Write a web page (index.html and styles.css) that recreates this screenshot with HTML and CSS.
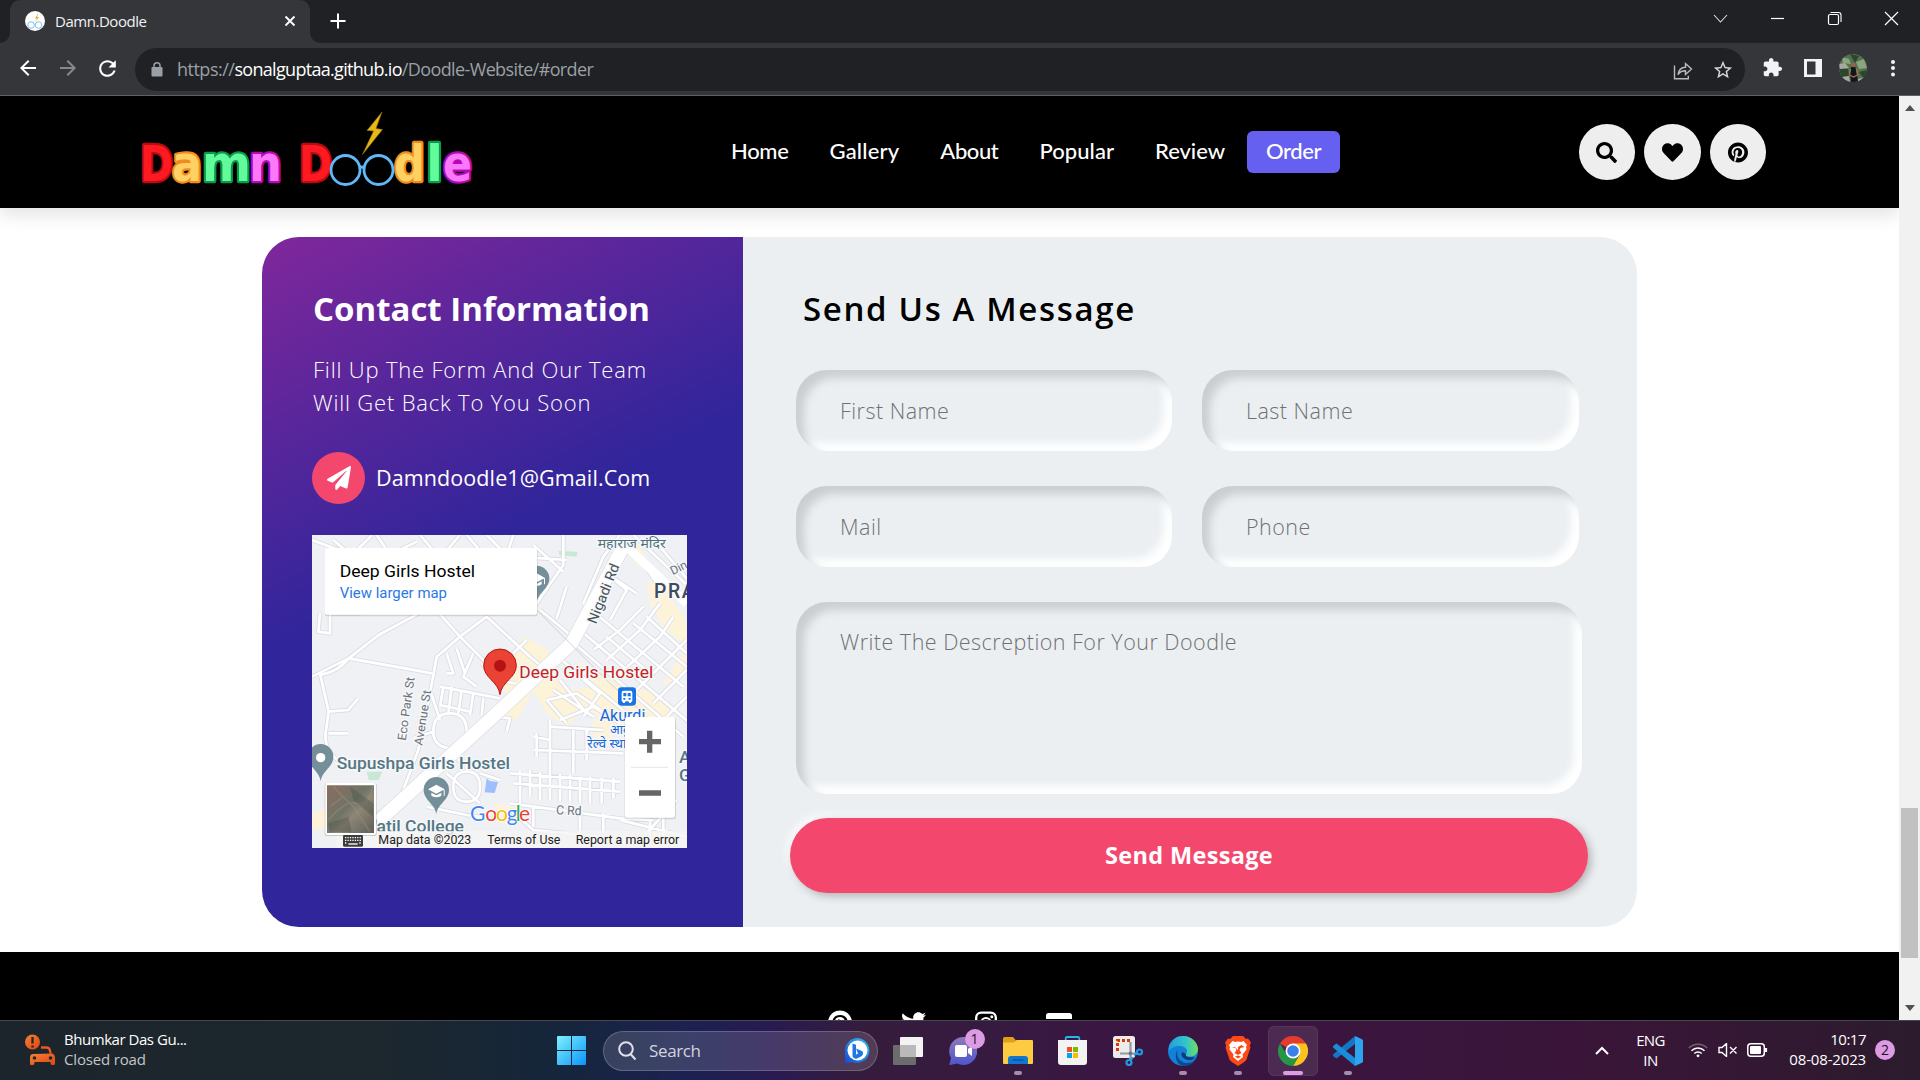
FILE: index.html
```html
<!DOCTYPE html>
<html lang="en">
<head>
<meta charset="utf-8">
<title>Damn.Doodle</title>
<link rel="stylesheet" href="styles.css">
</head>
<body>
<svg class="defs" width="0" height="0" aria-hidden="true">
  <defs>
    <symbol id="pinterest" viewBox="0 0 496 512"><path d="M496 256c0 137-111 248-248 248-25.600 0-50.200-3.900-73.400-11.100 10.100-16.500 25.200-43.500 30.800-65 3-11.600 15.400-59 15.400-59 8.100 15.400 31.700 28.500 56.800 28.500 74.800 0 128.700-68.800 128.700-154.300 0-81.900-66.900-143.200-152.900-143.200-107 0-163.900 71.800-163.900 150.100 0 36.400 19.400 81.700 50.300 96.100 4.700 2.200 7.200 1.200 8.300-3.300.8-3.400 5-20.300 6.900-28.100.6-2.500.3-4.700-1.700-7.100-10.100-12.500-18.300-35.300-18.300-56.600 0-54.700 41.400-107.600 112-107.600 60.900 0 103.600 41.500 103.600 100.900 0 67.100-33.900 113.600-78 113.600-24.300 0-42.600-20.100-36.700-44.800 7-29.500 20.500-61.300 20.500-82.600 0-19-10.200-34.900-31.400-34.900-24.900 0-44.900 25.700-44.900 60.200 0 22 7.400 36.800 7.400 36.800s-24.500 103.800-29 123.200c-5 21.400-3 51.600-.9 71.200C65.400 450.900 0 361.100 0 256 0 119 111 8 248 8s248 111 248 248z"/></symbol>
  </defs>
</svg>

<div class="screen">
  <header class="tabstrip">
    <div class="tab">
      <svg class="favicon" width="20" height="20" viewBox="0 0 20 20"><circle cx="10" cy="10" r="10" fill="#fff"/><path d="M13.500 2 10 7.500l2-.3-2 4 4-5.200-2 .3z" fill="#d8a91c"/><circle cx="6" cy="14" r="3.300" fill="none" stroke="#7cc0f5"/><circle cx="13.500" cy="14" r="3.300" fill="none" stroke="#7cc0f5"/></svg>
      <span class="tab-title">Damn.Doodle</span>
      <svg width="12" height="12" viewBox="0 0 12 12"><path d="M1.500 1.500l9 9m0-9l-9 9" stroke="#fff" stroke-width="1.900"/></svg>
    </div>
    <svg class="newtab" width="16" height="16" viewBox="0 0 16 16"><path d="M8 .5v15M.5 8h15" stroke="#fff" stroke-width="2"/></svg>
    <div class="window-buttons">
      <svg viewBox="0 0 57 36"><path d="M22 15l6.500 7 6.500-7" fill="none" stroke="#e0e0e0" stroke-width="1.100"/></svg>
      <svg viewBox="0 0 57 36"><path d="M22 18.500h13" stroke="#fff" stroke-width="1.200"/></svg>
      <svg viewBox="0 0 57 36"><rect x="22.500" y="14.500" width="10" height="10" rx="1.500" fill="none" stroke="#fff" stroke-width="1.200"/><path d="M24.500 12.500h8a2.500 2.500 0 0 1 2.500 2.500v7" fill="none" stroke="#fff" stroke-width="1.100"/></svg>
      <svg viewBox="0 0 57 36"><path d="M22 12l13 13m0-13l-13 13" stroke="#fff" stroke-width="1.200"/></svg>
    </div>
  </header>

  <div class="toolbar">
    <span class="tool nav-tool"><svg width="24" height="24" viewBox="0 0 24 24" fill="#fff"><path d="M20 11H7.830l5.590-5.590L12 4l-8 8 8 8 1.410-1.410L7.830 13H20v-2z"/></svg></span>
    <span class="tool nav-tool"><svg width="24" height="24" viewBox="0 0 24 24" fill="#87898c"><path d="M4 11h12.170l-5.590-5.590L12 4l8 8-8 8-1.410-1.410L16.170 13H4v-2z"/></svg></span>
    <span class="tool nav-tool"><svg width="25" height="25" viewBox="0 0 24 24" fill="#fff"><path d="M17.650 6.350C16.200 4.900 14.210 4 12 4c-4.420 0-7.990 3.580-7.990 8s3.570 8 7.990 8c3.730 0 6.840-2.550 7.730-6h-2.080c-.82 2.330-3.040 4-5.650 4-3.310 0-6-2.690-6-6s2.690-6 6-6c1.660 0 3.140.69 4.220 1.780L13 11h7V4l-2.350 2.350z"/></svg></span>
    <div class="omnibox">
      <svg class="lock" width="12" height="15" viewBox="0 0 12 15"><rect x=".5" y="5" width="11" height="9.500" rx="1.200" fill="#9aa0a6"/><path d="M3 6V3.800a3 3 0 0 1 6 0V6" fill="none" stroke="#9aa0a6" stroke-width="1.500"/></svg>
      <span class="url"><span class="scheme">https://</span><span class="host">sonalguptaa.github.io</span><span class="path">/Doodle-Website/#order</span></span>
      <span class="tool"><svg width="20" height="20" viewBox="0 0 20 20" fill="none" stroke="#b9bbbe" stroke-width="1.400"><path d="M1.500 5.500v13.300h13.800v-3M5 14.500c.8-5 3.500-7 7.500-7.200V3.500l6 5.600-6 5.400v-3.800c-3.500 0-5.800 1.300-7.500 3.800z"/></svg></span>
      <span class="tool"><svg width="22" height="22" viewBox="0 0 24 24" fill="#d5d7da"><path d="M22 9.240l-7.190-.62L12 2 9.190 8.630 2 9.240l5.460 4.730L5.820 21 12 17.270 18.180 21l-1.630-7.030L22 9.240zM12 15.400l-3.760 2.270 1-4.280-3.320-2.880 4.380-.38L12 6.100l1.710 4.040 4.380.38-3.320 2.880 1 4.280L12 15.400z"/></svg></span>
    </div>
    <span class="tool"><svg width="21" height="21" viewBox="0 0 24 24" fill="#f1f3f4"><path d="M20.500 11H19V7c0-1.100-.9-2-2-2h-4V3.500C13 2.120 11.880 1 10.500 1S8 2.120 8 3.500V5H4c-1.100 0-1.990.9-1.990 2v3.800H3.500c1.490 0 2.700 1.210 2.700 2.700s-1.210 2.700-2.700 2.700H2V20c0 1.100.9 2 2 2h3.800v-1.500c0-1.490 1.210-2.700 2.700-2.700 1.490 0 2.700 1.210 2.700 2.700V22H17c1.100 0 2-.9 2-2v-4h1.500c1.380 0 2.500-1.120 2.500-2.500S21.880 11 20.500 11z"/></svg></span>
    <span class="tool"><svg width="18" height="18" viewBox="0 0 18 18"><path d="M0 0h18v18H0zM3 2.500v13h8.500v-13z" fill="#f1f3f4" fill-rule="evenodd"/></svg></span>
    <span class="tool"><svg width="28" height="28" viewBox="0 0 28 28"><clipPath id="av"><circle cx="14" cy="14" r="14"/></clipPath><g clip-path="url(#av)"><path fill="#55724f" d="M0 0h28v28H0z"/><path fill="#8ba57f" d="M3 3l7 2 2 5-8-1zM17 8l8-3 3 9-8 1z"/><path fill="#2c462c" d="M11 0l9 2-4 7zM0 14l9 1 1 7-8 1zM20 18l8-2-3 9z"/><path fill="#a7aaa2" d="M0 10l6-1 4 5-9 1zM3 23l7-1 1 6H5zM19 25l7-2v5h-7z"/><path fill="#13151d" d="M12 13l4-1 2 8 1 8h-7l-1-8z"/><circle cx="14.500" cy="11" r="2.200" fill="#9b604d"/><path d="M11.500 15l-1 6 4 2 4-2-1-6" stroke="#a96f59" stroke-width="1.300" fill="none"/></g></svg></span>
    <span class="tool"><svg width="6" height="18" viewBox="0 0 6 18" fill="#f1f3f4"><circle cx="3" cy="3" r="2"/><circle cx="3" cy="9" r="2"/><circle cx="3" cy="15.500" r="2"/></svg></span>
  </div>

  <div class="viewport">
    <main class="page">
      <div class="site-header">
        <svg class="logo" width="336" height="80" viewBox="138 106 336 80">
          <g font-family="DejaVu Sans" font-weight="700" font-size="49" stroke-width="4.500" stroke-linejoin="round" paint-order="stroke">
            <text x="141" y="179.500" textLength="33" lengthAdjust="spacingAndGlyphs" fill="#ff1a22" stroke="#b90c12">D</text>
            <text x="173" y="179.500" textLength="30" lengthAdjust="spacingAndGlyphs" fill="#ffd062" stroke="#f18c1c">a</text>
            <text x="203" y="179.500" textLength="49" lengthAdjust="spacingAndGlyphs" fill="#62fb9c" stroke="#0b9a4c">m</text>
            <text x="250" y="179.500" textLength="33" lengthAdjust="spacingAndGlyphs" fill="#fb78fb" stroke="#b409b5">n</text>
            <text x="300" y="179.500" textLength="33" lengthAdjust="spacingAndGlyphs" fill="#ff1a22" stroke="#b90c12">D</text>
            <text x="395" y="179.500" textLength="31" lengthAdjust="spacingAndGlyphs" fill="#ffd062" stroke="#f18c1c">d</text>
            <text x="427" y="179.500" textLength="17" lengthAdjust="spacingAndGlyphs" fill="#62fb9c" stroke="#0b9a4c">l</text>
            <text x="444" y="179.500" textLength="29" lengthAdjust="spacingAndGlyphs" fill="#fb78fb" stroke="#b409b5">e</text>
          </g>
          <g fill="none" stroke="#5fb8f8" stroke-width="2.800"><circle cx="346.500" cy="169" r="14.500"/><circle cx="379.500" cy="169" r="14.500"/><path d="M360.500 167q2.500-2 4.800 0"/></g>
          <path d="M383 111l-15 18.500 6.500.5-11 23.500 20-25-6.500-1z" fill="#e8b818" stroke="#8c6a0c" stroke-width=".6"/>
        </svg>
        <nav class="nav">
          <a class="nav-home">Home</a><a>Gallery</a><a class="nav-about">About</a><a class="nav-popular">Popular</a><a class="nav-review">Review</a><a class="active">Order</a>
        </nav>
        <div class="round-buttons">
          <span><svg width="21" height="21" viewBox="0 0 512 512"><path d="M505 442.700L405.300 343c-4.500-4.500-10.600-7-17-7H372c27.600-35.300 44-79.700 44-128C416 93.100 322.900 0 208 0S0 93.100 0 208s93.100 208 208 208c48.300 0 92.700-16.400 128-44v16.300c0 6.400 2.500 12.500 7 17l99.700 99.700c9.400 9.400 24.600 9.400 33.900 0l28.300-28.300c9.400-9.400 9.400-24.600.1-34zM208 336c-70.700 0-128-57.200-128-128 0-70.700 57.200-128 128-128 70.700 0 128 57.200 128 128 0 70.700-57.200 128-128 128z"/></svg></span>
          <span><svg width="21" height="21" viewBox="0 0 512 512"><path d="M462.300 62.600C407.500 15.900 326 24.300 275.700 76.200L256 96.500l-19.700-20.300C186.100 24.300 104.500 15.900 49.700 62.600c-62.800 53.600-66.100 149.800-9.900 207.900l193.500 199.800c12.500 12.900 32.800 12.900 45.300 0l193.500-199.800c56.300-58.100 53-154.300-9.800-207.900z"/></svg></span>
          <span><svg width="20" height="21"><use href="#pinterest"/></svg></span>
        </div>
      </div>

      <section class="contact">
        <div class="info">
          <h2>Contact Information</h2>
          <p>Fill Up The Form And Our Team Will Get Back To You Soon</p>
          <div class="mail">
            <span class="mail-icon"><svg width="24" height="24" viewBox="0 0 512 512" fill="#fff"><path d="M476 3.200L12.500 270.600c-18.100 10.400-15.800 35.600 2.200 43.200L121 358.400l287.300-253.200c5.500-4.900 13.300 2.600 8.600 8.300L176 407v80.500c0 23.600 28.500 32.900 42.500 15.800L282 426l124.600 52.200c14.200 6 30.400-2.900 33-18.200l72-432C515 7.800 493.300-6.800 476 3.200z"/></svg></span>
            <span class="mail-text">Damndoodle1@Gmail.Com</span>
          </div>
          <svg class="map" width="375" height="313" viewBox="36 45 1125 939" font-family="Roboto, 'Noto Sans', sans-serif">
            <defs>
              <g id="streets" fill="none" stroke-linejoin="round">
                <path d="M36 470l110-55 90-70 130-70M146 415l170 30 80 15M60 280l-5 55 35 5V280h90l20-50M146 415q-30 40-85 50l25 110-10 70q0 60 60 90M85 575l60-5 30-35M85 640h60M36 60l120 45 60-60M100 60l60 50M230 45l40 60 80-40M360 45l60 70 60-70M500 45l60 70M560 45l60 60 20-60M650 110l150 10M790 45v90l-90 130M700 75l90 80M720 270l85 70M800 200l-30 95M480 350L400 260M480 350l-70 60-20 110-35 170-60 160-80 40M480 350l120 120M480 350l80-60 130 120 60 50M640 400l40-40M440 400l20 60h-20M470 385l25 75M520 400l-30 70 40 30M545 430l40 50 60 10M420 500l180 35M430 500l-10 60M455 500l-10 80M485 510l-10 70M520 520l-10 65M420 555l90 20M550 535l-5 50"/>
                <path d="M400 635q0-55 50-55t50 55-50 50-50-50M400 635l-60 20M420 600l-30-90M450 685l30 40M460 800q0-45 40-45t40 45-40 45-40-45M440 760l100 90M380 860l120 25 70 10M540 760l60 20M500 755v-40M590 590l40 5-10 40M630 760l330 25M640 790l320 25M660 750v100M690 750v80M720 755v85M750 760v80M780 760v85M810 765v80M840 770v80M870 770v80M905 775v75M940 775v60M700 690l270 10M710 640v70M750 600v160M700 650l50 10M750 620l160 10M820 630v130M860 630v90M630 850l330 45 100 5M630 870l70 60 200 20M700 860v60M840 870v70M910 880v60M960 900l200 50M1090 850v120M1050 900v80M1130 840l-100 110"/>
                <path d="M850 250l60-140 50-65M850 250l300 250M870 250l50-90 60 50-50 90M920 160l90 60M1000 45l160 150M1010 100l60 90M1050 45l110 130M840 330l330 280M810 360l340 290M760 400l320 260M880 390l80-60 70-70M920 420l100-90 60-80M960 460l120-110 40-60M1010 510l150-150M1060 550l100-100M1100 590l60-60M1040 290l120 110M1000 310l160 130M920 350l130 110M740 540l90-20 100 70M780 600l100-40 80 50M740 540l60 70M840 470l60 50-50 70M780 480l80 100M760 510l120 80"/>
              </g>
              <linearGradient id="sat" x1="0" y1="0" x2="1" y2="1"><stop offset="0" stop-color="#8a6d60"/><stop offset=".45" stop-color="#6f7466"/><stop offset=".6" stop-color="#8e8676"/><stop offset="1" stop-color="#5e5f57"/></linearGradient>
            </defs>
            <path fill="#eff1f4" d="M36 45h1125v939H36z"/>
            <g fill="#fdf3d8"><path d="M670 350l75 40-5 60 60 60 90-10-60-80 120 70 120 30 50 70-30 60-100-40-70 10-60-60-60 60-60-40-40-70-50 90-50-20 20-60-20-40z"/><path d="M1040 180l60 40 60 80v80l-70-60-40-70zM1161 380l-80 120 80-40zM36 880l60-20v60l-60 10zM880 600l70 10-20 60-50-20zM1050 910l70 30-20 44h-60zM580 850l60 10-20 60zM1000 45l60 110-50-20z"/></g>
            <path fill="#c8e8d4" d="M775 92l58 4-4 14-50-4zM200 755h46l-10 25h-30z"/>
            <path fill="#9dbffb" d="M560 775l10 8 24 3-10 33-30-2z"/>
            <use href="#streets" stroke="#d9dce2" stroke-width="13"/>
            <use href="#streets" stroke="#fff" stroke-width="8"/>
            <path d="M970 80L815 370 590 580 240 900l-90 84" fill="none" stroke="#dfe1e6" stroke-width="44"/>
            <path d="M970 80L815 370 590 580 240 900l-90 84" fill="none" stroke="#fff" stroke-width="39"/>
            <path d="M970 70l190 180" fill="none" stroke="#fff" stroke-width="26"/>
            <path d="M660 220l270 270 100 90" fill="none" stroke="#cfd2d6" stroke-width="3"/>
            <g stroke="#f6f7f9" stroke-width="9" stroke-linejoin="round" paint-order="stroke">
              <g fill="#47525c">
                <text x="893" y="84" font-size="36" fill="#4f737d" textLength="204" lengthAdjust="spacingAndGlyphs">महाराज मंदिर</text>
                <text transform="translate(888 314) rotate(-68)" font-size="42" textLength="190" lengthAdjust="spacingAndGlyphs">Nigadi Rd</text>
                <text transform="translate(1118 166) rotate(-27)" font-size="36" fill="#6b737b">Din</text>
                <text x="1062" y="233" font-size="58" font-weight="500" letter-spacing="5" fill="#3f4b56">PRA</text>
                <text transform="translate(317 663) rotate(-82)" font-size="36" fill="#6b737b" textLength="192" lengthAdjust="spacingAndGlyphs">Eco Park St</text>
                <text transform="translate(367 678) rotate(-81)" font-size="36" fill="#6b737b" textLength="168" lengthAdjust="spacingAndGlyphs">Avenue St</text>
                <text x="768" y="883" font-size="38" fill="#6b737b" textLength="76" lengthAdjust="spacingAndGlyphs" transform="rotate(2 768 883)">C Rd</text>
              </g>
              <g fill="#557785" font-weight="500">
                <text x="110" y="747" font-size="52" textLength="520" lengthAdjust="spacingAndGlyphs">Supushpa Girls Hostel</text>
                <text x="222" y="937" font-size="50" textLength="270" lengthAdjust="spacingAndGlyphs">'atil College</text>
                <text x="1137" y="730" font-size="52">A</text><text x="1137" y="782" font-size="52">G</text>
              </g>
              <text x="658" y="473" font-size="51" fill="#c5221f" textLength="402" lengthAdjust="spacingAndGlyphs">Deep Girls Hostel</text>
              <g fill="#1967d2"><text x="899" y="602" font-size="48" textLength="137" lengthAdjust="spacingAndGlyphs">Akurdi</text><text x="930" y="641" font-size="38">आकुर्डी</text><text x="862" y="685" font-size="38" textLength="170" lengthAdjust="spacingAndGlyphs">रेल्वे स्थानक</text></g>
            </g>
            <path d="M600 524c-5-40-49-50-49-88a49 49 0 0 1 98 0c0 38-44 48-49 88z" fill="#ea4335" stroke="#b31412" stroke-width="3"/><circle cx="600" cy="437" r="18" fill="#b31412"/>
            <g fill="#748e9a">
              <path id="pin" d="M62 784c-4-32-38-42-38-74a38 38 0 0 1 76 0c0 32-34 42-38 74z"/>
              <use href="#pin" x="347" y="99"/><use href="#pin" x="648" y="-535"/>
            </g>
            <circle cx="62" cy="713" r="14" fill="#fff"/>
            <path id="cap" d="M384 808l25-14 25 14-25 13zM394 818l15 8 15-8v9q-15 10-30 0zM431 809h3v18h-3z" fill="#fff"/><use href="#cap" x="301" y="-634"/>
            <rect x="954" y="502" width="54" height="55" rx="10" fill="#1a73e8"/><path d="M965 518q0-6 6-6h20q6 0 6 6v24l-5 7h-4l-3-5h-8l-3 5h-4l-5-7z" fill="#fff"/><path d="M970 519h9v10h-9zM983 519h9v10h-9zM970 534h6v5h-6zM986 534h6v5h-6z" fill="#1a73e8"/>
            <rect x="75" y="87" width="638" height="202" rx="6" fill="#000" opacity=".13"/><rect x="75" y="84" width="636" height="200" rx="6" fill="#fff"/>
            <text x="119" y="170" font-size="52" textLength="406" lengthAdjust="spacingAndGlyphs">Deep Girls Hostel</text>
            <text x="119" y="233" font-size="44" fill="#2a79e4" textLength="322" lengthAdjust="spacingAndGlyphs">View larger map</text>
            <rect x="974" y="594" width="154" height="304" rx="6" fill="#000" opacity=".13"/><rect x="975" y="591" width="150" height="302" rx="6" fill="#fff"/>
            <path d="M1017 665h66M1049 632v66M1017 819h66" stroke="#666" stroke-width="16"/><path d="M993 742h111" stroke="#e6e6e6" stroke-width="3"/>
            <path fill="#f5f5f5" opacity=".8" d="M110 933h1051v51H110z"/>
            <rect x="74" y="790" width="156" height="158" rx="6" opacity=".18"/><rect x="76" y="789" width="152" height="156" rx="6" fill="#fff"/><path d="M81 796h141v143H81z" fill="url(#sat)"/>
            <path d="M85 900q50-60 85-50t48-50M100 800l60 60 50 75M90 860l40-30" fill="none" stroke="#a29684" stroke-width="5" opacity=".35"/><path d="M150 800l70 50v40l-60-50zM85 910l60-20 10 45H90z" fill="#4c5349" opacity=".4"/>
            <text y="904" font-size="63" font-family="Lato" stroke-width="5" stroke="#fff" paint-order="stroke"><tspan x="510" fill="#4285f4">G</tspan><tspan x="556" fill="#ea4335">o</tspan><tspan x="588" fill="#fbbc04">o</tspan><tspan x="620" fill="#4285f4">g</tspan><tspan x="647" fill="#34a853">l</tspan><tspan x="657" fill="#ea4335">e</tspan></text>
            <rect x="129" y="945" width="60" height="35" rx="4" fill="#3c3c3c"/><path d="M135 953h48M135 961h48M135 969h5M178 969h5" stroke="#fff" stroke-width="4" stroke-dasharray="4 3.300"/><path d="M145 972h28" stroke="#fff" stroke-width="4"/>
            <g font-size="37" fill="#222"><text x="235" y="972" textLength="279" lengthAdjust="spacingAndGlyphs">Map data ©2023</text><text x="562" y="972" textLength="219" lengthAdjust="spacingAndGlyphs">Terms of Use</text><text x="827" y="972" textLength="311" lengthAdjust="spacingAndGlyphs">Report a map error</text></g>
          </svg>
        </div>
        <form class="message">
          <h2>Send Us A Message</h2>
          <div class="fields">
            <input placeholder="First Name"><input placeholder="Last Name">
            <input placeholder="Mail"><input placeholder="Phone">
          </div>
          <textarea placeholder="Write The Descreption For Your Doodle"></textarea>
          <button type="button">Send Message</button>
        </form>
      </section>

      <footer class="site-footer">
        <svg width="24" height="25"><use href="#pinterest"/></svg>
        <svg width="25" height="25" viewBox="0 0 512 512"><path d="M459.370 151.716c.325 4.548.325 9.097.325 13.645 0 138.720-105.583 298.558-298.558 298.558-59.452 0-114.680-17.219-161.137-47.106 8.447.974 16.568 1.299 25.340 1.299 49.055 0 94.213-16.568 130.274-44.832-46.132-.975-84.792-31.188-98.112-72.772 6.498.974 12.995 1.624 19.818 1.624 9.421 0 18.843-1.300 27.614-3.573-48.081-9.747-84.143-51.980-84.143-102.985v-1.299c13.969 7.797 30.214 12.670 47.431 13.319-28.264-18.843-46.781-51.005-46.781-87.391 0-19.492 5.197-37.360 14.294-52.954 51.655 63.675 129.300 105.258 216.365 109.807-1.624-7.797-2.599-15.918-2.599-24.040 0-57.828 46.782-104.934 104.934-104.934 30.213 0 57.502 12.670 76.670 33.137 23.715-4.548 46.456-13.320 66.599-25.340-7.798 24.366-24.366 44.833-46.132 57.827 21.117-2.273 41.584-8.122 60.426-16.243-14.292 20.791-32.161 39.308-52.628 54.253z"/></svg>
        <svg width="22" height="25" viewBox="0 0 22 25"><rect x="1.200" y="2.700" width="19.600" height="19.600" rx="5" fill="none" stroke="#fff" stroke-width="2.300"/><circle cx="11" cy="12.500" r="4.600" fill="none" stroke="#fff" stroke-width="2"/><circle cx="16.800" cy="6.800" r="1.500"/></svg>
        <svg width="26" height="25" viewBox="0 0 26 25"><path d="M2.500 3h21a2.500 2.500 0 0 1 2.500 3v3H0V6a2.500 2.500 0 0 1 2.500-3z"/></svg>
      </footer>
    </main>
    <div class="scrollbar">
      <svg width="10" height="6" viewBox="0 0 10 6"><path d="M0 6l5-6 5 6z" fill="#505050"/></svg>
      <div class="thumb"></div>
      <svg width="10" height="6" viewBox="0 0 10 6"><path d="M0 0l5 6 5-6z" fill="#505050"/></svg>
    </div>
  </div>

  <div class="taskbar">
    <div class="widget">
      <svg width="30" height="32" viewBox="0 0 30 32"><defs><linearGradient id="or" x2="1" y2="1"><stop stop-color="#f48238"/><stop offset="1" stop-color="#e0440c"/></linearGradient></defs><circle cx="7.500" cy="8" r="7.500" fill="url(#or)"/><path d="M7.500 3v6.500M7.500 11.500v2" stroke="#1c262b" stroke-width="2.300"/><path d="M16 13.500h5.500q3 0 3.700 4l.5 2" fill="none" stroke="#ec5a1c" stroke-width="2.300"/><path d="M8 20q-3 0-3 4v6q0 1 1.500 1H8q1.500 0 1.500-3h16q0 3 1.500 3h1.500q1.500 0 1.500-1v-6q0-4-3-4.500z" fill="url(#or)"/><circle cx="9.500" cy="24" r="1.800" fill="#1c262b"/><circle cx="25.500" cy="24" r="1.800" fill="#1c262b"/></svg>
      <div class="w-text"><div class="w-title">Bhumkar Das Gu...</div><div class="w-sub">Closed road</div></div>
    </div>
    <svg class="start" width="29" height="29" viewBox="0 0 29 29"><defs><linearGradient id="win" x2="1" y2="1"><stop stop-color="#7ff1fb"/><stop offset="1" stop-color="#0a94fb"/></linearGradient></defs><path fill="url(#win)" d="M1 0h13v14H0V1q0-1 1-1zM15 0h13q1 0 1 1v13H15zM0 15h14v14H1q-1 0-1-1zM15 15h14v13q0 1-1 1H15z"/></svg>
    <div class="search">
      <svg width="19" height="20" viewBox="0 0 19 20" fill="none" stroke="#e2e1ea" stroke-width="2"><circle cx="8" cy="8" r="6.800"/><path d="M12.500 13l5 5.500"/></svg>
      <span>Search</span>
      <svg class="bing" width="26" height="26" viewBox="0 0 26 26"><defs><linearGradient id="bg" x1="1" x2="0" y2="1"><stop stop-color="#2fc3ee"/><stop offset="1" stop-color="#1747d3"/></linearGradient></defs><path d="M13.500 0A12.500 12.500 0 1 1 8 24l-7.500 1.500Q1.500 22 1 19V12.500A12.500 12.500 0 0 1 13.500 0z" fill="url(#bg)"/><circle cx="13.500" cy="12.500" r="10" fill="#fff"/><path d="M8.500 5.500l3.500 1.300v9.700l-3.500 2zM12 10.500l6.500 2.700q1.500 3.500-1.500 5.300l-4 2q-2.500.8-4.500-2l5.500-3z" fill="#1e78e4"/></svg>
    </div>
    <div class="apps">
      <span class="app"><svg width="30" height="28" viewBox="0 0 30 28"><rect y="8" width="23" height="20" rx="1" fill="#6c6c6c"/><rect x="7" width="23" height="20" rx="1" fill="#f3f3f3"/><path d="M7 8h16v12H7z" fill="#b9b9b9"/></svg></span>
      <span class="app"><svg width="28" height="28" viewBox="0 0 28 28"><defs><linearGradient id="tm" y2="1" x2="0"><stop stop-color="#8e7ab9"/><stop offset="1" stop-color="#4f55cc"/></linearGradient></defs><path d="M14 0a14 14 0 1 1-6 26.500L1 28q-1 0-.5-1l1.500-6A14 14 0 0 1 14 0z" fill="url(#tm)"/><rect x="6" y="8" width="12" height="12" rx="2" fill="#fff"/><path d="M19 12l4-3v10l-4-3z" fill="#fff"/></svg><b class="badge">1</b></span>
      <span class="app open"><svg width="30" height="27" viewBox="0 0 30 27"><path d="M0 1.500Q0 0 1.500 0H10l3 3.500V8H0z" fill="#e0a010"/><path d="M0 5.500h11l2.500-2.500H29q1 0 1 1v22q0 1-1 1H1q-1 0-1-1z" fill="#fdcb41"/><path d="M5 27v-5q0-3 3-3h14q3 0 3 3v5z" fill="#0f78cd"/><path d="M9.500 23h11" stroke="#0a4f94" stroke-width="1.300"/></svg></span>
      <span class="app"><svg width="29" height="29" viewBox="0 0 29 29"><path d="M7.700 6V2.500q0-1.500 1.500-1.500h10.600q1.500 0 1.500 1.500V6" fill="none" stroke="#2db4ec" stroke-width="1.800"/><path d="M0 4h29v22q0 3-3 3H3q-3 0-3-3z" fill="#f3f3f3"/><path d="M9 11h5v5H9z" fill="#f25022"/><path d="M15 11h5v5h-5z" fill="#7fba00"/><path d="M9 17h5v5H9z" fill="#00a4ef"/><path d="M15 17h5v5h-5z" fill="#ffb900"/></svg></span>
      <span class="app"><svg width="30" height="30" viewBox="0 0 30 30"><rect width="22" height="22" rx="2.500" fill="#ececec"/><path d="M17 4.500H4.500V15" fill="none" stroke="#d83b01" stroke-width="3" stroke-dasharray="3 2"/><path d="M17.500 6v15.500L16.500 25M7 17.500h15l3-1" fill="none" stroke="#919aa2" stroke-width="2.200"/><g fill="none" stroke="#1e9be6" stroke-width="2.200"><circle cx="26.500" cy="16" r="2.500"/><circle cx="16" cy="26.500" r="2.500"/><path d="M18 24l1.500-3M24 17.500L21 19"/></g><circle cx="17.500" cy="17.500" r="2" fill="#6b7680"/></svg></span>
      <span class="app open"><svg width="30" height="30" viewBox="0 0 30 30"><defs><linearGradient id="e1" x2="1"><stop stop-color="#1f9fe0"/><stop offset=".6" stop-color="#35c6c6"/><stop offset="1" stop-color="#71e05a"/></linearGradient></defs><circle cx="15" cy="15" r="15" fill="#1381d8"/><path d="M1 10C4 3 9 0 15 0c9 0 15 7 15 13 0 5-4 7.500-8 7.500-3 0-5-1-4-2.500 3-4-1-8-6-8-4 0-8 1-11 5z" fill="url(#e1)"/><path d="M10 13c-3 7 2 14 9 14 3 0 6-1 8-3-3 5-8 6-12 6C9 29 5 20 10 13z" fill="#0c4a8e"/><path d="M18 18c-1 2 1 4 6 3l3 1q-5 4-10 1-5-3-3-7z" fill="#123b7a"/></svg></span>
      <span class="app open"><svg width="26" height="30" viewBox="0 0 26 30"><path d="M8 0h10l3 3 2-.5 3 4-1.200 3 .7 2-4 12Q21 25 13 30 5 25 4.500 23.500l-4-12 .7-2L0 6.500l3-4L5 3z" fill="#fb4a16"/><path d="M7.500 5L10 6l3-.5 3 .5 2.500-1 3.500 4-1 2 .5 2.500-4 5 .5 2.500-5 4-5-4 .5-2.500-4-5L5 11 4 9z" fill="#fff"/><path d="M6.500 11l4 1 1 2-2 3 3.500 2 3.500-2-2-3 1-2 4-1-3-2-3.500 2L13 14l-3-3zM10 20.500l3-1 3 1-3 2z" fill="#fb4a16"/></svg></span>
      <span class="app active"><svg width="30" height="30" viewBox="0 0 30 30"><path d="M15 15L2 7.500A15 15 0 0 1 28 7.500z" fill="#e33b2e"/><path d="M15 15V7.500h13A15 15 0 0 1 15 30l6.500-11.250z" fill="#fcc31e"/><path d="M15 15l6.500 3.750L15 30A15 15 0 0 1 2 7.500l6.500 11.250z" fill="#269646"/><circle cx="15" cy="15" r="7.500" fill="#fff"/><circle cx="15" cy="15" r="5.800" fill="#3c7eec"/></svg></span>
      <span class="app open"><svg width="30" height="30" viewBox="0 0 30 30"><path d="M22 0v8L3.500 22.500 0 20v-1.500z" fill="#1276c2"/><path d="M22 30v-8L3.500 7.500 0 10v1.500z" fill="#1b8cd8"/><path d="M22 0l7 3.200q1 .5 1 1.500v20.600q0 1-1 1.500L22 30z" fill="#2fa4ee"/></svg></span>
    </div>
    <div class="tray">
      <svg class="chev" width="14" height="9" viewBox="0 0 14 9"><path d="M1 8l6-6 6 6" fill="none" stroke="#fff" stroke-width="2"/></svg>
      <div class="lang"><div>ENG</div><div>IN</div></div>
      <svg class="wifi" width="20" height="16" viewBox="0 0 20 16" fill="none" stroke="#fff" stroke-width="1.500"><path d="M.8 6a13 13 0 0 1 18.400 0" opacity=".3"/><path d="M3.500 8.800a9 9 0 0 1 13 0M6.300 11.500a5.300 5.300 0 0 1 7.400 0"/><circle cx="10" cy="13.800" r="1.400" fill="#fff" stroke="none"/></svg>
      <svg class="mute" width="20" height="14" viewBox="0 0 20 14" fill="none" stroke="#fff" stroke-width="1.400"><path d="M1 4.500h3l4.500-4v13l-4.500-4H1zM12 4l6.500 6.500m0-6.500L12 10.500"/></svg>
      <svg class="batt" width="21" height="14" viewBox="0 0 21 14"><rect x=".8" y=".8" width="16.500" height="12.400" rx="3" fill="none" stroke="#fff" stroke-width="1.500"/><rect x="3" y="3" width="11" height="8" rx="1" fill="#fff"/><path d="M19 5v4" stroke="#fff" stroke-width="2.200"/></svg>
      <div class="clock"><div class="time">10:17</div><div>08-08-2023</div></div>
      <b class="notif">2</b>
    </div>
  </div>
</div>
</body>
</html>
```
FILE: styles.css
```css
* { box-sizing: border-box; }
body { margin: 0; overflow: hidden; background: #fff; }
svg { display: block; flex: none; }
.defs { position: absolute; }
.screen { width: 1920px; height: 1080px; display: flex; flex-direction: column; overflow: hidden; font-family: "Open Sans", "Noto Sans", sans-serif; }

/* browser chrome */
.tabstrip { height: 43px; flex: none; background: #202124; display: flex; align-items: flex-start; }
.tab { position: relative; width: 300px; height: 43px; margin-left: 10px; padding: 0 14px 1px 15px; border-radius: 10px 10px 0 0; background: #35363a; display: flex; align-items: center; }
.tab::before, .tab::after { content: ""; position: absolute; bottom: 0; width: 10px; height: 10px; }
.tab::before { left: -10px; background: radial-gradient(circle at 0 0, transparent 9.5px, #35363a 10px); }
.tab::after { right: -10px; background: radial-gradient(circle at 100% 0, transparent 9.5px, #35363a 10px); }
.tab-title { flex: 1; margin: 0 0 1px 10px; font-size: 15px; line-height: 20px; letter-spacing: -.46px; color: #f1f3f4; }
.newtab { margin: 13px 0 0 19.5px; }
.window-buttons { display: flex; margin: 0 .5px 0 auto; }
.window-buttons svg { width: 57px; height: 36px; }
.toolbar { height: 53px; flex: none; padding: 0 7.5px 3px; background: #35363a; border-bottom: 1px solid #5f6063; display: flex; align-items: center; }
.tool { width: 40px; height: 40px; flex: none; display: flex; align-items: center; justify-content: center; }
.nav-tool { margin-top: 1.5px; }
.omnibox { flex: 1; height: 43px; margin: 4px 7.5px 0 7px; padding: 0 2px 0 16px; border-radius: 22px; background: #202124; display: flex; align-items: center; }
.url { flex: 1; margin: 0 0 1px 9px; padding-left: 5.5px; font-size: 18px; line-height: 24px; color: #9aa0a6; white-space: nowrap; }
.scheme { letter-spacing: -.5px; }
.host { color: #fff; letter-spacing: -.69px; }
.path { letter-spacing: -.62px; }

/* page */
.viewport { flex: 1; min-height: 0; display: flex; }
.page { flex: 1; height: 924px; overflow: hidden; display: flex; flex-direction: column; align-items: center; font-family: "Open Sans", "Noto Sans", sans-serif; background: #fff; }
.site-header { width: 100%; height: 112px; flex: none; padding-left: 137px; background: #000; box-shadow: 0 8px 16px rgba(0, 0, 0, .1); display: flex; align-items: center; }
.logo { margin-bottom: 11px; }
.nav { display: flex; gap: 3px; margin-left: 239px; }
.nav a { height: 42px; padding: 1px 19px 3px; border-radius: 6px; font-family: Lato, sans-serif; font-size: 22px; font-weight: 500; line-height: 38px; letter-spacing: .18px; color: #fff; }
.nav .nav-home { letter-spacing: -.35px; }
.nav .nav-about { letter-spacing: -.4px; }
.nav .nav-popular { letter-spacing: .05px; }
.nav .nav-review { letter-spacing: -.05px; }
.nav .active { background: #6660f0; letter-spacing: -.4px; }
.round-buttons { display: flex; gap: 9px; margin: 0 133px 0 auto; }
.round-buttons span { width: 56.500px; height: 56px; border-radius: 50%; background: #eee; display: flex; align-items: center; justify-content: center; }
.contact { width: 1375px; height: 690px; flex: none; margin: 29px 0 0; align-self: flex-start; margin-left: 262px; border-radius: 37px; overflow: hidden; display: flex; background: #ebeff2; }
.info { width: 481px; padding: 52px 50px 0; background: linear-gradient(153deg, #80279b, #30259b 45%); color: #fff; }
h2 { margin: 0; font-size: 33px; line-height: 40px; white-space: nowrap; }
.info h2 { letter-spacing: 0; padding: 0 0 0 1px; }
.info p { width: 360px; margin: 24px 0 33px; padding-left: 1px; font-size: 22px; line-height: 33px; font-weight: 300; letter-spacing: .82px; }
.mail { display: flex; align-items: center; }
.mail-icon { width: 53px; height: 52px; border-radius: 50%; background: #f4476e; display: flex; align-items: center; justify-content: center; }
.mail-text { margin-left: 11px; font-size: 21.500px; line-height: 30px; letter-spacing: .1px; }
.map { margin-top: 31px; }
.message { width: 894px; padding: 52px 0 0 47px; }
.message h2 { padding-left: 13px; font-weight: 600; letter-spacing: 1.65px; color: #000; }
.fields { display: grid; grid-template-columns: 376px 377px; gap: 35px 30px; margin: 41px 0 35px 6px; }
input, textarea { display: block; margin: 0; border: 0; outline: 0; border-radius: 31px; resize: none; background: #ebeff2; box-shadow: inset 8px 8px 8px #cbced1, inset -8px -8px 8px #fff; font: 300 21.500px/40px "Open Sans", sans-serif; letter-spacing: .48px; }
input { height: 81px; padding: 0 44px 1px; }
textarea { width: 786px; height: 192px; margin-left: 6px; padding: 20px 44px; overflow: hidden; }
::placeholder { color: #6f7173; opacity: 1; }
button { display: block; width: 798px; height: 75px; margin: 24px 0 0; padding: 0 0 2px; border: 0; border-radius: 38px; background: #f4476e; box-shadow: 3px 3px 8px #b1b1b1, -3px -3px 8px #fff; color: #fff; font: 700 23.500px/40px "Open Sans", sans-serif; letter-spacing: .35px; }
.site-footer { width: 100%; flex: 1; margin-top: 25px; padding: 58px 0 0 827.5px; overflow: hidden; background: #000; display: flex; gap: 49px; fill: #fff; }
.scrollbar { width: 21px; background: #f1f1f1; display: flex; flex-direction: column; align-items: center; padding: 9px 0; }
.thumb { width: 17px; height: 150px; margin: 697px 0 auto; background: #c1c1c1; }

/* taskbar */
.taskbar { height: 60px; flex: none; padding-left: 25px; border-top: 1px solid #45484e; display: flex; align-items: center; background: linear-gradient(90deg, #1c252b 0, #1c272e 20%, #15263b 29%, #1c2152 36%, #281a52 40%, #351c3c 45%, #361a40 52%, #3b1543 60%, #3a1539 82%, #2c1b2d 100%); color: #fff; font-size: 15px; line-height: 20px; }
.widget { width: 532px; display: flex; align-items: center; gap: 9px; padding-bottom: 2px; }
.w-text { margin-bottom: 2px; }
.w-title { letter-spacing: -.46px; }
.w-sub { letter-spacing: -.16px; color: #c3c7c9; }
.search { width: 275px; height: 40px; margin: 0 2px 0 17px; padding: 0 7px 0 14px; border: 1px solid rgba(255, 255, 255, .2); border-radius: 20px; background: rgba(255, 255, 255, .14); display: flex; align-items: center; font-size: 17px; letter-spacing: -.37px; color: #d5d3de; }
.search span { margin: 0 auto 0 12px; }
.apps { display: flex; }
.app { position: relative; width: 50px; height: 50px; margin: 0 2.5px; border-radius: 6px; display: flex; align-items: center; justify-content: center; }
.app.open::after, .app.active::after { content: ""; position: absolute; bottom: 1px; width: 8px; height: 4px; border-radius: 2px; background: #a18fa6; }
.app.active { background: rgba(255, 255, 255, .09); border: 1px solid rgba(255, 255, 255, .06); }
.app.active::after { bottom: 0; width: 20px; background: #dd9ce4; }
.badge, .notif { width: 20px; height: 20px; border-radius: 50%; background: #dc9be3; color: #211424; font-weight: 400; font-size: 14px; line-height: 20px; text-align: center; }
.badge { position: absolute; left: 27px; top: 3px; }
.tray { display: flex; align-items: center; margin: 0 25px 1px auto; }
.lang { width: 29px; margin: 0 19px 1px 27px; text-align: center; letter-spacing: -.6px; white-space: nowrap; }
.wifi { margin: 0 10px 0 4px; }
.batt { margin: 0 21px 0 9px; }
.clock { width: 77px; margin-right: 9px; padding-bottom: 2px; text-align: right; letter-spacing: -.16px; white-space: nowrap; }
.time { letter-spacing: -.5px; }
```
